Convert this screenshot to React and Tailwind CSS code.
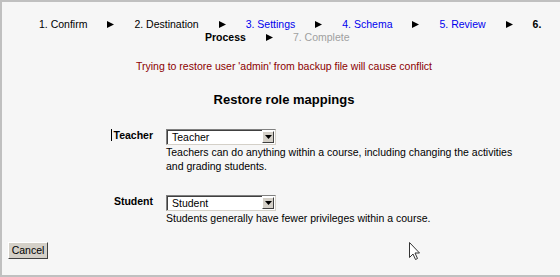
import React from "react";

function Arrow() {
  return (
    <svg width="7" height="7" viewBox="0 0 7 7" className="shrink-0">
      <polygon points="0,0 7,3.5 0,7" fill="black" />
    </svg>
  );
}

function Select({ value }) {
  return (
    <div className="w-[110px] h-[16px] bg-white border-t border-l border-[#808080] border-r border-b border-r-[#d4d0c8] border-b-[#d4d0c8] flex">
      <div className="flex-1 border-t border-l border-[#404040] flex items-center pl-[4px] leading-none">
        {value}
      </div>
      <div className="w-[12px] my-px mr-px bg-[#d4d0c8] border-t border-l border-white border-r border-b border-r-[#404040] border-b-[#404040] flex items-center justify-center">
        <svg width="7" height="4" viewBox="0 0 7 4">
          <polygon points="0,0 7,0 3.5,4" fill="black" />
        </svg>
      </div>
    </div>
  );
}

function RoleRow({ label, value, lines, caret, className = "" }) {
  return (
    <div className={`flex ${className}`}>
      <div className="w-[151px] shrink-0 flex justify-end items-start font-bold leading-[14px] -mt-px">
        {caret && <span className="w-px h-[12px] mt-px mr-[2px] bg-black" />}
        {label}
      </div>
      <div className="ml-[13px] flex flex-col">
        <Select value={value} />
        <div className="leading-[14px] whitespace-nowrap">
          {lines.map((l, i) => (
            <div key={i}>{l}</div>
          ))}
        </div>
      </div>
    </div>
  );
}

export default function App() {
  return (
    <div className="relative w-[560px] h-[277px] overflow-hidden bg-[#f6f6f6] border-l-2 border-t-2 border-b-2 border-[#c0c0c0] text-black text-[10.5px] font-['Liberation_Sans',Arial,sans-serif]">
      {/* Steps */}
      <div className="pt-[16px] leading-[13px] whitespace-nowrap">
        <div className="flex items-center gap-[20px] pl-[37px] h-[13px]">
          <span className="shrink-0">1. Confirm</span>
          <Arrow />
          <span className="shrink-0">2. Destination</span>
          <Arrow />
          <span className="shrink-0 text-[#0000ee]">3. Settings</span>
          <Arrow />
          <span className="shrink-0 text-[#0000ee]">4. Schema</span>
          <Arrow />
          <span className="shrink-0 text-[#0000ee]">5. Review</span>
          <Arrow />
          <span className="shrink-0 font-bold">6.</span>
        </div>
        <div className="flex items-center gap-[20px] pl-[203px] h-[13px]">
          <span className="shrink-0 font-bold">Process</span>
          <Arrow />
          <span className="shrink-0 text-[#a0a0a0]">7. Complete</span>
        </div>
      </div>

      <div className="pl-[6px]">
        <div className="mt-[15px] text-center text-[#8b0000] leading-[14px]">
          Trying to restore user 'admin' from backup file will cause conflict
        </div>
        <div className="mt-[19px] text-center font-bold text-[13px] leading-[16px]">
          Restore role mappings
        </div>
      </div>

      <RoleRow
        className="mt-[21px]"
        caret
        label="Teacher"
        value="Teacher"
        lines={[
          "Teachers can do anything within a course, including changing the activities",
          "and grading students.",
        ]}
      />
      <RoleRow
        className="mt-[22px]"
        label="Student"
        value="Student"
        lines={["Students generally have fewer privileges within a course."]}
      />

      <div className="mt-[17px] pl-[6px]">
        <button className="w-[40px] h-[17px] bg-[#d4d0c8] border-t border-l border-white border-r border-b border-r-[#404040] border-b-[#404040] text-[10.5px] leading-none flex items-center justify-center">
          Cancel
        </button>
      </div>

      {/* mouse pointer */}
      <svg className="absolute left-[407px] top-[240px]" width="12" height="19" viewBox="0 0 12 19">
        <path d="M0.5 0.5 L0.5 15.5 L4 12 L6.5 17.5 L8.5 16.5 L6 11 L10.5 11 Z" fill="white" stroke="#333" strokeWidth="1" />
      </svg>
    </div>
  );
}
